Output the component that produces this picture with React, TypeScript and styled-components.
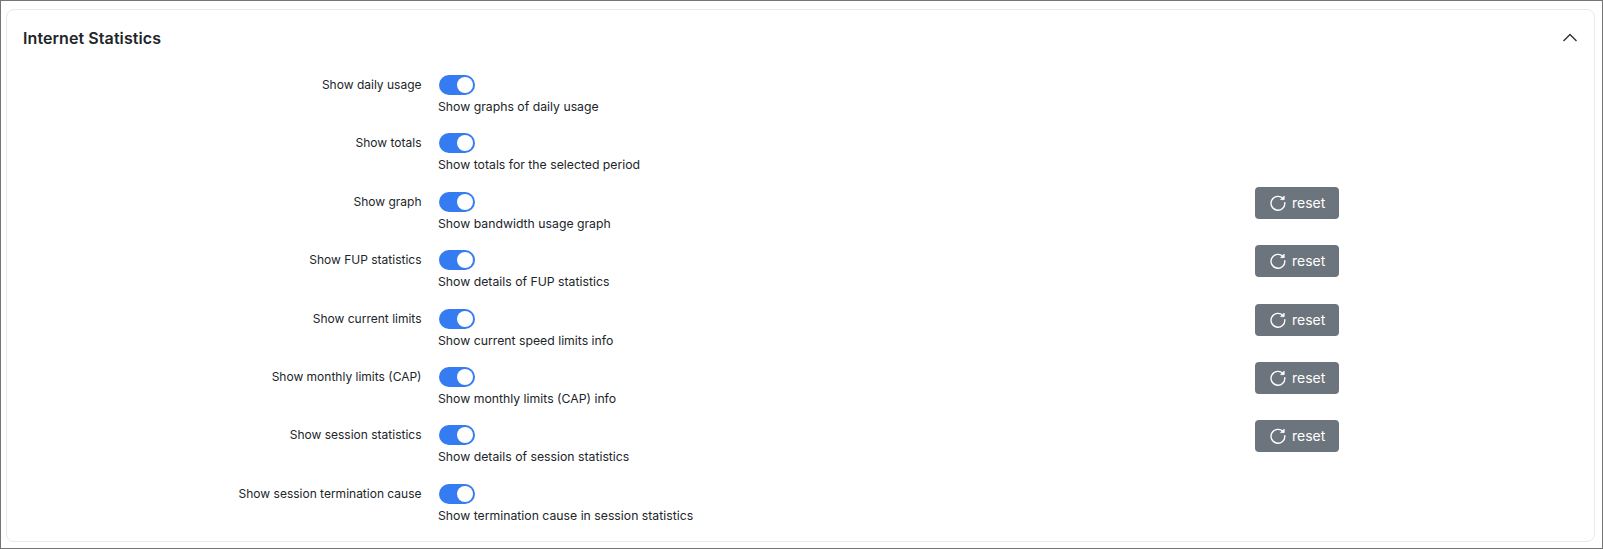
import React, { useState } from "react";
import styled, { createGlobalStyle } from "styled-components";

const GlobalStyle = createGlobalStyle`
  * { box-sizing: border-box; }
  body { margin: 0; background: #fff; font-family: Inter, sans-serif; color: #212529; }
`;

const Page = styled.main`
  width: 100%;
  height: 549px;
  padding: 8px 7px 6px 5px;
  border: 1px solid #757575;
`;

const Card = styled.section`
  height: 533px;
  border: 1px solid #e9e9ea;
  border-radius: 8px;
  background: #fff;
`;

const Header = styled.header`
  display: flex;
  justify-content: space-between;
  align-items: center;
  height: 56px;
  padding: 0 16px;
`;

const Title = styled.h2`
  margin: 0;
  font-size: 16px;
  font-weight: 600;
  line-height: 24px;
  letter-spacing: 0.08px;
`;

const Collapse = styled.button`
  display: flex;
  padding: 0;
  border: 0;
  background: none;
  color: #2b333b;
`;

const Rows = styled.div`
  padding-top: 9px;
`;

const Row = styled.div`
  display: grid;
  grid-template-columns: 415px 833px 84px;
  height: 58.4px;
`;

const Label = styled.label`
  padding-right: 0.5px;
  font-size: 12px;
  line-height: 20px;
  text-align: right;
`;

const Control = styled.div`
  padding-left: 16px;
`;

const Switch = styled.button<{ $on: boolean }>`
  display: flex;
  justify-content: ${(p) => (p.$on ? "flex-end" : "flex-start")};
  width: 36px;
  height: 20px;
  margin-left: 1px;
  padding: 2px;
  border: 0;
  border-radius: 10px;
  background: ${(p) => (p.$on ? "#357bf2" : "#adb5bd")};
`;

const Knob = styled.span`
  width: 16px;
  height: 16px;
  border-radius: 50%;
  background: #fff;
`;

const Hint = styled.div`
  margin-top: 3px;
  font-size: 12.25px;
  line-height: 18px;
`;

const ResetButton = styled.button`
  display: flex;
  align-items: center;
  gap: 6px;
  width: 84px;
  height: 32px;
  margin-top: -5px;
  padding: 0 0 0 15px;
  border: 0;
  border-radius: 4px;
  background: #6c757d;
  color: #fff;
  font: 400 14px/20px Inter, sans-serif;
`;

const settings = [
  { label: "Show daily usage", hint: "Show graphs of daily usage" },
  { label: "Show totals", hint: "Show totals for the selected period" },
  { label: "Show graph", hint: "Show bandwidth usage graph", reset: true },
  { label: "Show FUP statistics", hint: "Show details of FUP statistics", reset: true },
  { label: "Show current limits", hint: "Show current speed limits info", reset: true },
  { label: "Show monthly limits (CAP)", hint: "Show monthly limits (CAP) info", reset: true },
  { label: "Show session statistics", hint: "Show details of session statistics", reset: true },
  { label: "Show session termination cause", hint: "Show termination cause in session statistics" },
];

const ResetIcon = () => (
  <svg width="16" height="16" viewBox="0 0 16 16" fill="none" stroke="currentColor" strokeWidth="1.35" strokeLinecap="round" strokeLinejoin="round">
    <path d="M14.8 7.6A6.9 6.9 0 1 1 13 3.6" />
    <path d="M14.2 1.4v3.2h-3.2z" fill="currentColor" strokeWidth="0.8" />
  </svg>
);

function Setting({ label, hint, reset }: { label: string; hint: string; reset?: boolean }) {
  const [on, setOn] = useState(true);
  return (
    <Row>
      <Label>{label}</Label>
      <Control>
        <Switch type="button" role="switch" aria-label={label} aria-checked={on} $on={on} onClick={() => setOn(!on)}>
          <Knob />
        </Switch>
        <Hint>{hint}</Hint>
      </Control>
      {reset && (
        <ResetButton type="button" onClick={() => setOn(true)}>
          <ResetIcon />
          reset
        </ResetButton>
      )}
    </Row>
  );
}

export default function App() {
  const [open, setOpen] = useState(true);
  return (
    <Page>
      <GlobalStyle />
      <Card>
        <Header>
          <Title>Internet Statistics</Title>
          <Collapse type="button" aria-label="Toggle section" onClick={() => setOpen(!open)}>
            <svg width="16" height="16" viewBox="0 0 16 16" fill="none" stroke="currentColor" strokeWidth="1.4">
              <path d="M1.5 11 8 4.5 14.5 11" />
            </svg>
          </Collapse>
        </Header>
        {open && (
          <Rows>
            {settings.map((s) => (
              <Setting key={s.label} {...s} />
            ))}
          </Rows>
        )}
      </Card>
    </Page>
  );
}
